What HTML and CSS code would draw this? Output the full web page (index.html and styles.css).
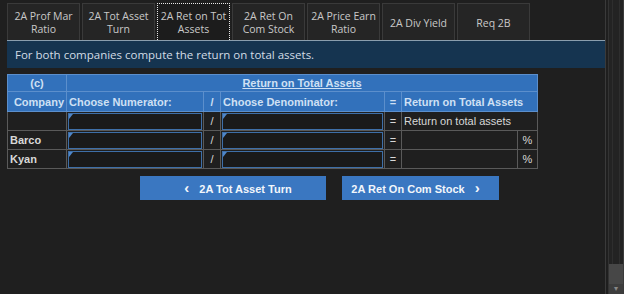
FILE: index.html
```html
<!DOCTYPE html>
<html>
<head>
<meta charset="UTF-8">
<title>Return on Total Assets</title>
<link rel="stylesheet" href="styles.css">
</head>
<body>
<div class="page">
  <div class="main">

    <div class="tabs">
      <div class="tab">2A Prof Mar<br>Ratio</div>
      <div class="tab">2A Tot Asset<br>Turn</div>
      <div class="tab active">2A Ret on Tot<br>Assets</div>
      <div class="tab">2A Ret On<br>Com Stock</div>
      <div class="tab">2A Price Earn<br>Ratio</div>
      <div class="tab">2A Div Yield</div>
      <div class="tab">Req 2B</div>
    </div>

    <div class="banner">For both companies compute the return on total assets.</div>

    <table class="grid">
      <tr class="head">
        <td class="c-co center">(c)</td>
        <td colspan="6" class="center"><u>Return on Total Assets</u></td>
      </tr>
      <tr class="head">
        <td class="right">Company</td>
        <td>Choose Numerator:</td>
        <td class="center">/</td>
        <td>Choose Denominator:</td>
        <td class="center">=</td>
        <td colspan="2">Return on Total Assets</td>
      </tr>
      <tr>
        <td></td>
        <td class="in"><div class="box"></div></td>
        <td class="center">/</td>
        <td class="in"><div class="box"></div></td>
        <td class="center">=</td>
        <td colspan="2">Return on total assets</td>
      </tr>
      <tr>
        <td class="name">Barco</td>
        <td class="in"><div class="box"></div></td>
        <td class="center">/</td>
        <td class="in"><div class="box"></div></td>
        <td class="center">=</td>
        <td class="res"></td>
        <td class="pct">%</td>
      </tr>
      <tr>
        <td class="name">Kyan</td>
        <td class="in"><div class="box"></div></td>
        <td class="center">/</td>
        <td class="in"><div class="box"></div></td>
        <td class="center">=</td>
        <td class="res"></td>
        <td class="pct">%</td>
      </tr>
    </table>

    <div class="nav">
      <div class="btn prev"><span class="arr">&lsaquo;</span>2A Tot Asset Turn</div>
      <div class="btn next">2A Ret On Com Stock<span class="arr">&rsaquo;</span></div>
    </div>

  </div>

  <div class="scroll">
    <div class="track"></div>
    <div class="thumb"></div>
    <div class="down">&#9662;</div>
  </div>
</div>
</body>
</html>
```

FILE: styles.css
```css
html, body{
    margin:0;
    height:100%;
    background:#1f1f1f;
}

.page{
    display:flex;
    height:294px;
}

.main{
    width:600px;
    padding:3px 0 0 7px;
    border-right:1px solid #3a3a3a;
}

/* TABS */
.tabs{
    display:flex;
    gap:2px;
}

.tab{
    width:71px;
    height:34px;
    border:1px solid #3a3a3a;
    border-bottom:none;
    background:#252525;
    color:#c9c9c9;
    font-family:"Open Sans", sans-serif;
    font-size:10.5px;
    line-height:13px;
    display:flex;
    align-items:center;
    justify-content:center;
    text-align:center;
    padding-top:2px;
}

.tab.active{
    border:1px dotted #e8e8e8;
    border-bottom:none;
    background:#1c1c1c;
}

/* BANNER */
.banner{
    height:27px;
    border-top:1px solid #8a9eae;
    background:#153450;
    color:#d2dce6;
    font-family:"Open Sans", sans-serif;
    font-size:11.5px;
    line-height:27px;
    padding-left:8px;
}

/* TABLE */
.grid{
    margin-top:6px;
    border-collapse:collapse;
    font-family:"Liberation Sans", Arial, sans-serif;
    font-size:11px;
    color:#d8d8d8;
}

.grid td{
    border:1px solid #5a5a5a;
    height:18px;
    padding:0 2px;
    white-space:nowrap;
}

.grid .head td{
    background:#3271bb;
    color:#cfe0f4;
    font-weight:bold;
    border-color:#5c8fcc;
}

.grid .head:first-child td{ height:16px; }
.grid .head:nth-child(2) td{ height:19px; }

.center{ text-align:center; }
.right{ text-align:right; }

.c-co{ width:54px; }

.name{ font-weight:bold; }

.grid td.in{
    padding:0 1px;
}

.box{
    height:15px;
    border:1px solid #3e6fa8;
    background:#1a1a1a;
    position:relative;
}

.box::before{
    content:"";
    position:absolute;
    left:0;
    top:0;
    border-top:5px solid #4f86c8;
    border-right:4px solid transparent;
}

.grid tr td:nth-child(2).in{ width:134px; }
.grid tr td:nth-child(4).in{ width:161px; }
.grid tr td:nth-child(3){ width:12px; }
.grid tr td:nth-child(5){ width:12px; }
.res{ width:111px; }
.pct{ width:15px; text-align:center; }

/* NAV BUTTONS */
.nav{
    display:flex;
    gap:16px;
    margin:7px 0 0 133px;
}

.btn{
    height:24px;
    line-height:24px;
    background:#3a77c1;
    color:#f2f6fb;
    font-family:"Liberation Sans", Arial, sans-serif;
    font-weight:bold;
    font-size:11px;
    text-align:center;
}

.btn.prev{ width:186px; }
.btn.next{ width:157px; }

.arr{
    font-size:15px;
    margin:0 10px;
}

/* SCROLLBAR */
.scroll{
    width:14px;
    margin-left:2px;
    position:relative;
    border-left:1px solid #333;
    border-right:1px solid #3a3a3a;
    background:#232323;
}

.track{
    position:absolute;
    left:3px;
    right:3px;
    top:0;
    bottom:30px;
    border-left:1px solid #2e2e2e;
    border-right:1px solid #2e2e2e;
}

.thumb{
    position:absolute;
    left:0;
    right:0;
    bottom:10px;
    height:20px;
    background:#474747;
}

.down{
    position:absolute;
    left:0;
    right:0;
    bottom:0;
    height:10px;
    color:#888;
    font-size:8px;
    line-height:10px;
    text-align:center;
    background:#3d3d3d;
}
```
